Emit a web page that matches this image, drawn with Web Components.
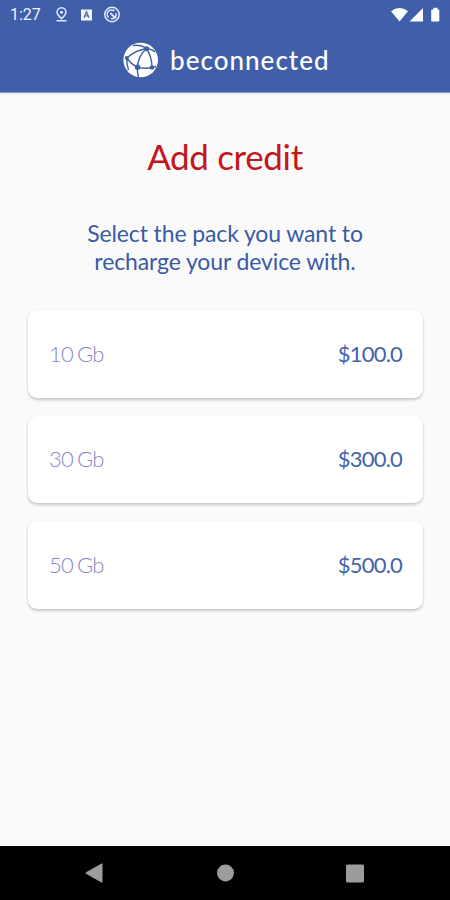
<!DOCTYPE html>
<html lang="en"><head><meta charset="utf-8"><title>beconnected</title>
<style>
html,body{margin:0;height:100%}
body{font-family:Lato,"Open Sans",sans-serif;background:#fafafa;overflow:hidden}
</style></head><body>
<bc-app>
<bc-status slot="top">1:27</bc-status>
<bc-brand slot="top">beconnected</bc-brand>
<bc-heading>Add credit<span slot="lead">Select the pack you want to<br>recharge your device with.</span></bc-heading>
<bc-pack price="$100.0">10 Gb</bc-pack>
<bc-pack price="$300.0">30 Gb</bc-pack>
<bc-pack price="$500.0">50 Gb</bc-pack>
<bc-nav slot="bottom"></bc-nav>
</bc-app>
<script>
const define=(name,html)=>customElements.define(name,class extends HTMLElement{
  constructor(){super();this.attachShadow({mode:'open'}).innerHTML=html;
    const p=this.shadowRoot.querySelector('.price');if(p)p.textContent=this.getAttribute('price');}
});
define('bc-app',`<style>
:host{display:flex;flex-direction:column;height:900px;width:450px;background:#fafafa}
header{height:92px;flex:none;background:#405fa8;box-shadow:0 1px 1px #8d9ab9;display:flex;flex-direction:column}
main{flex:1;display:flex;flex-direction:column;gap:18px;padding:0 27.500px}
</style><header><slot name="top"></slot></header><main><slot></slot></main><slot name="bottom"></slot>`);
define('bc-status',`<style>
:host{display:flex;height:30px;align-items:center;color:#eef2ff;font:16px/30px Roboto,sans-serif;padding:0 7px 0 10px}
.t{width:44px}svg{display:block}.i{margin-right:11px}.r{margin-left:auto}
</style><span class="t"><slot></slot></span>
<svg class="i" width="15" height="18" viewBox="0 0 15 18" fill="none" stroke="#e4eaff" stroke-width="1.5"><path d="M7.5 12.600C4.600 10 3.100 8.300 3.100 6.200a4.400 4.400 0 0 1 8.800 0c0 2.100-1.500 3.800-4.400 6.400zM2.500 14.800h10"/><circle cx="7.500" cy="6.200" r="1.500" fill="#e4eaff" stroke="none"/></svg>
<svg class="i" width="13" height="18" viewBox="0 0 13 18"><path fill="#f0f4ff" d="M1 3.500h11v11H1z"/><path d="M4 11.800l2.500-6 2.500 6M5 9.800h3" fill="none" stroke="#536da8" stroke-width="1.300"/></svg>
<svg width="18" height="18" viewBox="0 0 18 18" fill="none" stroke="#e4eaff" stroke-width="1.500"><circle cx="8" cy="8.500" r="7.200"/><path d="M4.700 11.500a4.300 4.300 0 0 1 5.800-6.500M7 12.600a4.300 4.300 0 0 0 5-5.400"/><path d="M6.300 7l5.500 5.400" stroke-width="1.900"/></svg>
<svg class="r" width="52" height="18" viewBox="0 0 52 18" fill="#fff"><path d="M0 5.300q8.500-6.800 17 0L8.500 15.500zM32 2V15.500H18.500zM41 3.500h1.500V1.800h4V3.500h1q.8 0 .8.800v10.400q0 .8-.8.800h-6.500q-.8 0-.8-.8V4.300q0-.8.800-.8z"/></svg>`);
define('bc-brand',`<style>
:host{display:flex;height:60px;align-items:center;padding-left:123px;color:#fff;font-size:26px;font-weight:500;letter-spacing:1.020px}
svg{flex:none;margin-right:11px}span{margin-top:-1px}
</style><svg width="36" height="36" viewBox="0 0 36 36"><circle cx="17.700" cy="18" r="17.300" fill="#fff"/><g fill="none" stroke="#405fa8" stroke-width="1.400"><path d="M3.800 16Q13 8 23.500 6.500Q15 14 14.500 25.300Q8 22 3.800 16Q3.500 22 5.500 28M14.500 25.300Q22 27 29 25.500Q29 15 23.500 6.500Q18 2.500 10 3.500M23.500 6.500Q29 7 32 10M14.500 25.300Q14 30 15.500 35M29 25.500L33 24.500"/></g><g fill="#405fa8"><circle cx="23.500" cy="6.800" r="2.500"/><circle cx="3.800" cy="16" r="2"/><circle cx="14.500" cy="25.300" r="2.700"/><circle cx="29" cy="25.500" r="2.300"/></g></svg><span><slot></slot></span>`);
define('bc-heading',`<style>
:host{display:block;height:200px;text-align:center}
h1{margin:0;padding-top:43px;font-size:35px;line-height:42px;font-weight:400;letter-spacing:-.35px;color:#c4161c}
p{margin:42px 0 0;font-size:23px;line-height:28px;letter-spacing:-.12px;color:#395ba5}
</style><h1><slot></slot></h1><p><slot name="lead"></slot></p>`);
define('bc-pack',`<style>
:host{display:flex;justify-content:space-between;align-items:center;box-sizing:border-box;height:87.500px;padding:0 20.500px .8px 21.500px;background:#fff;border-radius:9px;box-shadow:0 2px 3px rgba(0,0,0,.2),0 0 2px rgba(0,0,0,.06);font-size:22px;color:#8587c4;font-weight:300}
.name{letter-spacing:-.7px;word-spacing:-1.500px}
.price{color:#4463ab;font-weight:400;letter-spacing:-.8px}
</style><span class="name"><slot></slot></span><span class="price"></span>`);
define('bc-nav',`<style>
:host{display:flex;height:54px;flex:none;background:#000;justify-content:space-between;align-items:center;padding:0 85px}
</style><svg width="18" height="20" viewBox="0 0 18 20" fill="#9c9c9c"><path d="M16.500 .5q1-.4 1 .5v18q0 .9-1 .5L1 10.700q-.9-.7 0-1.400z"/></svg>
<svg width="18" height="18" viewBox="0 0 18 18" fill="#9c9c9c"><circle cx="9.500" cy="9" r="8.500"/></svg>
<svg width="19" height="19" viewBox="0 0 19 19" fill="#9c9c9c"><rect x="0" y=".5" width="18" height="18" rx="1.500"/></svg>`);
</script></body></html>
